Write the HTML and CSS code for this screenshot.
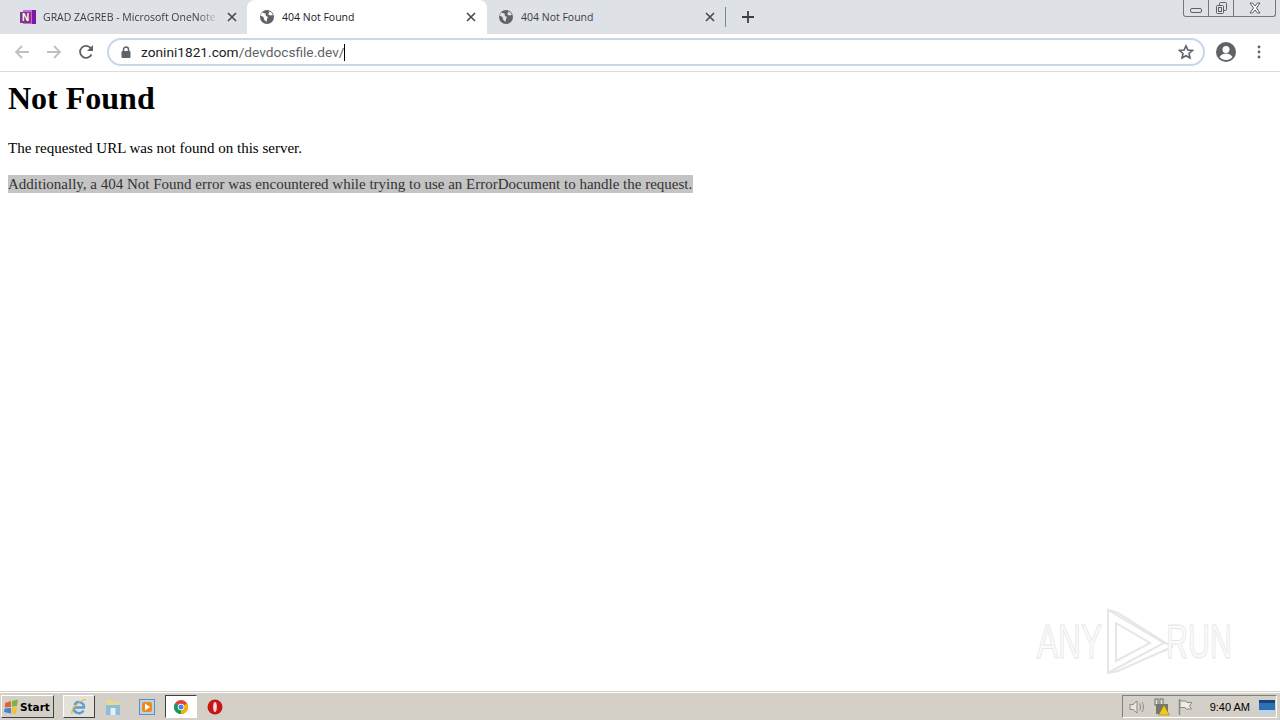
FILE: index.html
```html
<!DOCTYPE html>
<html lang="en">
<head>
    <meta charset="UTF-8">
    <title>404 Not Found</title>
    <link rel="stylesheet" href="styles.css">
</head>
<body>
    <div class="browser">
        <div class="tabstrip">
            <div class="tab tab-first">
                <svg class="tab-icon" viewBox="0 0 16 16"><rect x="3" y="1" width="13" height="14" fill="#ca64ea"/><rect x="12" y="1" width="4" height="14" fill="#7719aa"/><rect x="0" y="3" width="11" height="11" fill="#80397b"/><text x="5.5" y="12" class="note-letter">N</text></svg>
                <span class="tab-title fade">GRAD ZAGREB - Microsoft OneNote</span>
                <svg class="tab-close" viewBox="0 0 10 10"><path d="M1 1l8 8M9 1l-8 8"/></svg>
            </div>
            <div class="tab tab-active">
                <svg class="tab-icon" viewBox="0 0 16 16"><circle cx="8" cy="8" r="7" fill="#5f6368"/><path d="M3 3.500l3.500 1 .5 2.500 2 1-1 2-.5 3L5 10.500 4.500 8 1.500 6.500zM9.500 2l3 1.500L14 6l-3 .5-2-1.500 1.500-1.500z" fill="#ffffff"/></svg>
                <span class="tab-title">404 Not Found</span>
                <svg class="tab-close" viewBox="0 0 10 10"><path d="M1 1l8 8M9 1l-8 8"/></svg>
            </div>
            <div class="tab tab-last">
                <svg class="tab-icon" viewBox="0 0 16 16"><circle cx="8" cy="8" r="7" fill="#5f6368"/><path d="M3 3.500l3.500 1 .5 2.500 2 1-1 2-.5 3L5 10.500 4.500 8 1.500 6.500zM9.500 2l3 1.500L14 6l-3 .5-2-1.500 1.500-1.500z" fill="#dee1e6"/></svg>
                <span class="tab-title">404 Not Found</span>
                <svg class="tab-close" viewBox="0 0 10 10"><path d="M1 1l8 8M9 1l-8 8"/></svg>
            </div>
            <span class="tab-sep"></span>
            <svg class="new-tab" viewBox="0 0 12 12"><path d="M6 0v12M0 6h12"/></svg>
            <div class="win-controls">
                <span class="win-btn win-min"><svg viewBox="0 0 14 8"><rect x="1.500" y="2.500" width="11" height="4" rx="1.500"/></svg></span>
                <span class="win-btn win-max"><svg viewBox="0 0 14 14"><rect x="5.500" y="1.500" width="7" height="8" rx="1"/><rect x="2.500" y="4.500" width="7" height="8" rx="1" fill="#dee1e6"/><rect x="4.500" y="6.500" width="3" height="4"/></svg></span>
                <span class="win-btn win-close"><svg viewBox="0 0 14 12"><path d="M2 1h2.500L7 4l2.500-3H12L8.500 6 12 11H9.500L7 8l-2.500 3H2l3.500-5z"/></svg></span>
            </div>
        </div>

        <div class="toolbar">
            <svg class="nav-icon nav-off" viewBox="0 0 16 16"><path d="M15 8H2M8 2L2 8l6 6"/></svg>
            <svg class="nav-icon nav-off" viewBox="0 0 16 16"><path d="M1 8h13M8 2l6 6-6 6"/></svg>
            <svg class="nav-icon nav-reload" viewBox="0 0 16 16"><path d="M13.500 10.500A6 6 0 1 1 13 4.500"/><path class="solid" d="M15 1v6H9z"/></svg>
            <div class="omnibox">
                <svg class="lock" viewBox="0 0 10 12"><rect x="0.500" y="5" width="9" height="7" rx="1"/><path class="shackle" d="M2.500 5V3.500a2.500 2.500 0 0 1 5 0V5"/></svg>
                <span class="url"><span class="url-host">zonini1821.com</span>/devdocsfile.dev/</span><span class="caret"></span>
                <svg class="star" viewBox="0 0 16 16"><path d="M8 1.800l1.900 4.200 4.500.5-3.400 3 1 4.500L8 11.700 4 14l1-4.500-3.400-3 4.500-.5z"/></svg>
            </div>
            <svg class="avatar" viewBox="0 0 20 20"><circle cx="10" cy="10" r="10" fill="#5f6368"/><circle cx="10" cy="7.500" r="3.500" fill="#fff"/><path d="M3.500 15c1.500-2.500 4-3.500 6.500-3.500s5 1 6.500 3.500c-1.500 2-4 3-6.500 3s-5-1-6.500-3z" fill="#fff"/></svg>
            <svg class="menu-dots" viewBox="0 0 4 14"><circle cx="2" cy="2" r="1.400"/><circle cx="2" cy="7" r="1.400"/><circle cx="2" cy="12" r="1.400"/></svg>
        </div>

        <div class="page">
            <h1>Not Found</h1>
            <p>The requested URL was not found on this server.</p>
            <p><span class="selected">Additionally, a 404 Not Found error was encountered while trying to use an ErrorDocument to handle the request.</span></p>
            <svg class="watermark" viewBox="0 0 200 66">
                <text transform="translate(1 50) scale(.66 1)">ANY</text>
                <g class="wm-logo">
                    <path d="M72 2l56 33-56 30z"/>
                    <path d="M80 15l34 20-34 18z"/>
                    <path d="M72 2l10 3 54 34-8 4"/>
                    <path d="M72 65l10-2 54-24"/>
                </g>
                <text transform="translate(130 50) scale(.635 1)">RUN</text>
            </svg>
        </div>

        <div class="taskbar">
            <div class="start-btn">
                <svg viewBox="0 0 16 16"><path d="M1 4l6-2v6l-6 .5z" fill="#e8622c"/><path d="M8 2l6-1.500-1 6.500-5 .8z" fill="#7cb342"/><path d="M.800 9.500L7 9v5.500L0 13z" fill="#3c87d6"/><path d="M8 9l5-.8-1 6.800-4-.5z" fill="#f5c02c"/></svg>
                <span>Start</span>
            </div>
            <div class="task-btn task-ie">
                <svg viewBox="0 0 18 18"><path d="M3.500 9.500h10.500A5 5 0 0 0 4.500 7M13.500 12.500A5.200 5.200 0 0 1 3.800 9.500" fill="none" stroke="#5a9fd8" stroke-width="2.400"/><path d="M2 16C1 13 7 3 16 1.500" fill="none" stroke="#e0b83c" stroke-width="1.200"/></svg>
            </div>
            <div class="task-btn task-plain">
                <svg viewBox="0 0 18 18"><path d="M3 2h5l1 2h6v4H3z" fill="#ecd98c"/><path d="M2 7h14v10H2z" fill="#8dbdd8"/><rect x="6.500" y="10" width="5" height="7" fill="#e6eff3"/></svg>
            </div>
            <div class="task-btn task-plain">
                <svg viewBox="0 0 18 18"><rect x="1.500" y="1.500" width="15" height="15" fill="#bcd3ea" stroke="#5b8fc4"/><rect x="4" y="4" width="10" height="10" rx="2" fill="#ee8a1c"/><path d="M7 5.500l5 3.500-5 3.500z" fill="#fff"/></svg>
            </div>
            <div class="task-btn task-chrome">
                <svg viewBox="0 0 16 16"><circle cx="8" cy="8" r="7" fill="#db4437"/><path d="M8 8L14 4.500A7 7 0 0 1 8 15z" fill="#f4b400"/><path d="M8 8L8 15A7 7 0 0 1 2 4.500z" fill="#0f9d58"/><circle cx="8" cy="8" r="3.300" fill="#fff"/><circle cx="8" cy="8" r="2.500" fill="#4285f4"/></svg>
            </div>
            <div class="task-btn task-plain">
                <svg viewBox="0 0 18 18"><circle cx="9" cy="9" r="7.500" fill="#c81414"/><ellipse cx="9" cy="9" rx="1.800" ry="5" fill="#f4dede"/></svg>
            </div>
            <div class="tray">
                <svg class="tray-icon" viewBox="0 0 18 18"><path d="M2 6.500h3L9 3v12l-4-3.500H2z" fill="#e8e6e0" stroke="#8a8a84"/><path d="M11.500 5.500c1.500 2 1.500 5 0 7M14 4c2 3 2 7 0 10" fill="none" stroke="#8a8a84"/></svg>
                <svg class="tray-icon tray-network" viewBox="0 0 18 18"><rect x="2" y="1" width="3" height="6" fill="#e8e6e0" stroke="#6a6a64"/><rect x="7" y="1" width="3" height="6" fill="#e8e6e0" stroke="#6a6a64"/><rect x="3" y="6" width="12" height="10" fill="#77776f"/><path d="M11 7l5.500 10h-11z" fill="#f2c81e" stroke="#8c7410" stroke-width=".5"/></svg>
                <svg class="tray-icon" viewBox="0 0 18 18"><path d="M3.500 1v16" stroke="#8a8a84" stroke-width="1.500"/><path d="M4 3h6l1 1.500h5L13.500 8l2 3H10L9 9.500H4z" fill="#eeece6" stroke="#8a8a84"/></svg>
                <span class="clock">9:40 AM</span>
                <svg class="show-desktop" viewBox="0 0 16 14"><rect width="16" height="14" fill="#2f6fb4"/><rect y="10" width="16" height="4" fill="#bcd2e6"/><rect x="0" y="0" width="16" height="3" fill="#16457e"/></svg>
            </div>
        </div>
    </div>
</body>
</html>
```

FILE: styles.css
```css
html, body {
    margin: 0;
    padding: 0;
    background-color: #ffffff;
}
.browser {
    display: flex;
    flex-direction: column;
    width: 1280px;
    height: 720px;
    overflow: hidden;
}

/* tab strip */
.tabstrip {
    display: flex;
    align-items: center;
    height: 34px;
    flex: none;
    background-color: #dee1e6;
    font-family: "Open Sans", sans-serif;
    font-size: 10.500px;
    color: #3c4043;
}
.tab {
    display: flex;
    align-items: center;
    height: 34px;
    box-sizing: border-box;
    padding-bottom: 1px;
}
.tab-first {
    width: 247px;
    padding-left: 20px;
    padding-right: 10px;
}
.tab-active {
    width: 240px;
    padding-left: 12px;
    padding-right: 11px;
    background-color: #ffffff;
    border-radius: 8px 8px 0 0;
    color: #202124;
}
.tab-last {
    width: 238px;
    padding-left: 11px;
    padding-right: 10px;
}
.tab-icon {
    width: 16px;
    height: 16px;
    flex: none;
}
.note-letter {
    font-family: "Liberation Sans", sans-serif;
    font-size: 10px;
    font-weight: bold;
    fill: #ffffff;
    text-anchor: middle;
}
.tab-title {
    flex: 1;
    margin-left: 7px;
    white-space: nowrap;
    overflow: hidden;
}
.tab-first .tab-title {
    flex: none;
    width: 176px;
    margin-right: auto;
}
.fade {
    -webkit-mask-image: linear-gradient(to right, #000 88%, transparent 100%);
    mask-image: linear-gradient(to right, #000 88%, transparent 100%);
}
.tab-close {
    width: 10px;
    height: 10px;
    flex: none;
    fill: none;
    stroke: #45484d;
    stroke-width: 1.6;
}
.tab-sep {
    width: 1px;
    height: 20px;
    background-color: #80868b;
}
.new-tab {
    width: 12px;
    height: 12px;
    margin-left: 16px;
    fill: none;
    stroke: #3c4043;
    stroke-width: 1.8;
}
.win-controls {
    display: flex;
    align-self: flex-start;
    margin-left: auto;
    margin-right: 4px;
    height: 16px;
    border: 1px solid #74777c;
    border-top: none;
    border-radius: 0 0 3px 3px;
}
.win-btn {
    display: flex;
    align-items: center;
    justify-content: center;
    border-right: 1px solid #74777c;
}
.win-btn svg {
    fill: none;
    stroke: #5c5f64;
}
.win-min { width: 24px; }
.win-min svg { width: 14px; height: 8px; margin-top: 3px; }
.win-max { width: 24px; }
.win-max svg { width: 14px; height: 14px; }
.win-close { width: 41px; border-right: none; }
.win-close svg { width: 14px; height: 12px; fill: #ffffff; }

/* toolbar */
.toolbar {
    display: flex;
    align-items: center;
    height: 38px;
    flex: none;
    box-sizing: border-box;
    padding-bottom: 1px;
    background-color: #ffffff;
    border-bottom: 1px solid #dadce0;
}
.nav-icon {
    width: 16px;
    height: 16px;
    flex: none;
    margin-left: 16px;
    fill: none;
    stroke-width: 1.8;
}
.nav-icon:first-child { margin-left: 14px; }
.nav-off { stroke: #bdc1c6; }
.nav-reload { stroke: #5f6368; }
.nav-reload .solid {
    fill: #5f6368;
    stroke: none;
}
.omnibox {
    display: flex;
    align-items: center;
    width: 1098px;
    height: 28px;
    box-sizing: border-box;
    margin-left: 13px;
    padding-left: 12px;
    border: 2px solid #c9d7ea;
    border-radius: 14px;
    font-family: "Roboto", sans-serif;
    font-size: 13.700px;
    color: #5f6368;
}
.lock {
    width: 10px;
    height: 12px;
    flex: none;
    fill: #5f6368;
}
.lock .shackle {
    fill: none;
    stroke: #5f6368;
    stroke-width: 1.500;
}
.url {
    margin-left: 10px;
    white-space: nowrap;
}
.url-host { color: #202124; }
.caret {
    width: 1px;
    height: 17px;
    background-color: #000000;
}
.star {
    width: 16px;
    height: 16px;
    margin-left: auto;
    margin-right: 9px;
    fill: none;
    stroke: #5f6368;
    stroke-width: 1.600;
}
.avatar {
    width: 20px;
    height: 20px;
    flex: none;
    margin-left: 11px;
}
.menu-dots {
    width: 4px;
    height: 14px;
    flex: none;
    margin-left: 21px;
    fill: #5f6368;
}

/* page content */
.page {
    position: relative;
    flex: 1;
    padding: 8px;
    font-family: "Liberation Serif", serif;
    font-size: 15px;
    line-height: 18px;
    color: #000000;
}
h1 {
    margin: 0 0 22px;
    font-size: 32px;
    line-height: 37px;
}
p {
    margin: 0 0 18px;
}
.selected {
    display: inline-block;
    padding-right: 1px;
    background-color: #c4c4c4;
    color: #333333;
}
.watermark {
    position: absolute;
    left: 1036px;
    top: 536px;
    width: 200px;
    height: 66px;
}
.watermark text {
    font-family: "Liberation Sans", sans-serif;
    font-size: 48px;
    fill: #fbfbfb;
    stroke: #e6e6e6;
    stroke-width: 1;
}
.wm-logo {
    fill: none;
    stroke: #e6e6e6;
    stroke-width: 2;
}

/* windows taskbar */
.taskbar {
    display: flex;
    align-items: center;
    height: 28px;
    flex: none;
    box-sizing: border-box;
    border-top: 1px solid #ffffff;
    box-shadow: 0 -1px 0 #d4d0c8;
    background-color: #d4d0c8;
}
.start-btn {
    display: flex;
    align-items: center;
    width: 53px;
    height: 23px;
    box-sizing: border-box;
    margin-left: 1px;
    padding-left: 2px;
    border: 1px solid;
    border-color: #ffffff #404040 #404040 #ffffff;
    font-family: "DejaVu Sans", sans-serif;
    font-size: 10.500px;
    font-weight: bold;
    color: #000000;
}
.start-btn svg {
    width: 16px;
    height: 16px;
}
.task-btn {
    display: flex;
    align-items: center;
    justify-content: center;
    width: 32px;
    height: 23px;
    box-sizing: border-box;
    margin-left: 2px;
}
.task-btn svg {
    width: 18px;
    height: 18px;
}
.task-ie {
    margin-left: 9px;
    background-color: #e4e1db;
    border: 1px solid;
    border-color: #ffffff #404040 #404040 #ffffff;
}
.task-chrome {
    background-color: #ffffff;
    border: 1px solid;
    border-color: #404040 #ffffff #ffffff #404040;
}
.task-chrome svg {
    width: 16px;
    height: 16px;
}
.tray {
    display: flex;
    align-items: center;
    height: 23px;
    box-sizing: border-box;
    margin-left: auto;
    margin-right: 3px;
    padding-left: 4px;
    border: 1px solid;
    border-color: #808080 #ffffff #ffffff #808080;
    font-family: "Liberation Sans", sans-serif;
    font-size: 11px;
    color: #000000;
}
.tray-icon {
    width: 18px;
    height: 18px;
    margin-left: 1px;
    margin-right: 6px;
}
.tray-network {
    margin-right: 4px;
}
.clock {
    margin-left: 10px;
    white-space: nowrap;
}
.show-desktop {
    width: 16px;
    height: 14px;
    margin-left: 9px;
    margin-right: 1px;
}
```
